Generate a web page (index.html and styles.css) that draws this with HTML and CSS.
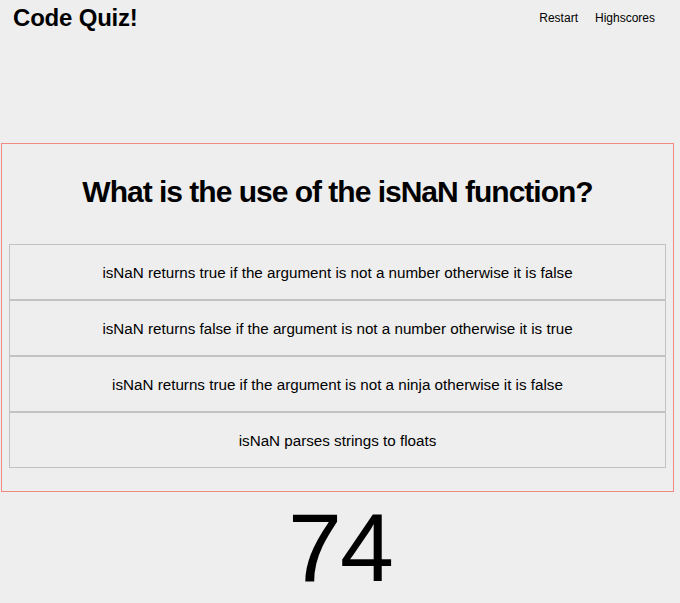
FILE: index.html
```html
<!DOCTYPE html>
<html lang="en">
<head>
<meta charset="utf-8">
<title>Code Quiz!</title>
<link rel="stylesheet" href="styles.css">
</head>
<body>
<header class="top-bar">
  <h1 class="brand">Code Quiz!</h1>
  <nav class="nav">
    <a class="nav-link" href="#">Restart</a>
    <a class="nav-link" href="#">Highscores</a>
  </nav>
</header>
<main class="quiz-card">
  <h2 class="question">What is the use of the isNaN function?</h2>
  <div class="answers">
    <button class="answer">isNaN returns true if the argument is not a number otherwise it is false</button>
    <button class="answer">isNaN returns false if the argument is not a number otherwise it is true</button>
    <button class="answer">isNaN returns true if the argument is not a ninja otherwise it is false</button>
    <button class="answer">isNaN parses strings to floats</button>
  </div>
</main>
<div class="timer">74</div>
</body>
</html>
```
FILE: styles.css
```css
html, body {
  margin: 0;
  padding: 0;
  background: #eeeeee;
  font-family: "Liberation Sans", Arial, sans-serif;
  color: #000;
}

.top-bar {
  display: flex;
  justify-content: space-between;
  align-items: center;
  height: 36px;
  padding: 0 25px 0 13px;
}

.brand {
  margin: 0;
  font-size: 24px;
  font-weight: bold;
  line-height: 36px;
  letter-spacing: -0.2px;
}

.nav {
  display: flex;
  gap: 17px;
  font-size: 12px;
  line-height: 36px;
}

.nav-link {
  color: #000;
  text-decoration: none;
}

.quiz-card {
  box-sizing: border-box;
  margin: 107px 6px 0 1px;
  border: 1px solid #f08a80;
  padding: 0 7px 23px;
}

.question {
  margin: 30px 0 34px;
  text-align: center;
  font-size: 30px;
  line-height: 36px;
  font-weight: bold;
  letter-spacing: -1px;
}

.answers {
  display: flex;
  flex-direction: column;
}

.answer {
  box-sizing: border-box;
  height: 56px;
  margin: 0;
  padding: 0;
  border: 1px solid #c2c2c2;
  background: #eeeeee;
  font-family: "Liberation Sans", Arial, sans-serif;
  font-size: 15.2px;
  color: #000;
  text-align: center;
}

.timer {
  margin-top: 7px;
  text-align: center;
  font-size: 97px;
  line-height: 98px;
  letter-spacing: -2px;
}
```
